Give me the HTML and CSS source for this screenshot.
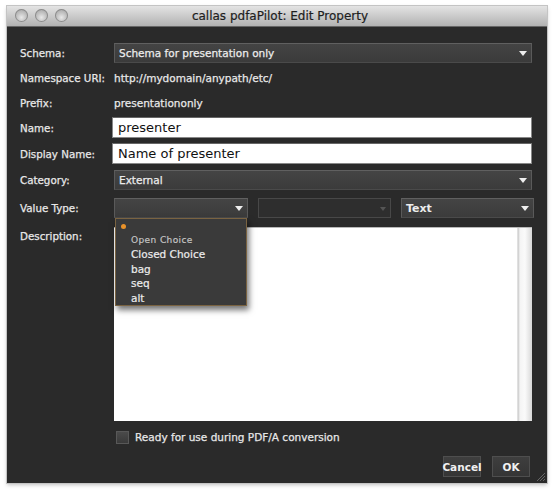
FILE: index.html
```html
<!DOCTYPE html>
<html>
<head>
<meta charset="utf-8">
<link rel="stylesheet" href="styles.css">
</head>
<body>
<div class="window">
  <div class="titlebar">
    <div class="lights"><span class="light"></span><span class="light"></span><span class="light"></span></div>
    <div class="title">callas pdfaPilot: Edit Property</div>
  </div>
  <div class="content">
    <div class="row r-schema">
      <div class="label">Schema:</div>
      <div class="select wide"><span>Schema for presentation only</span><i class="arrow"></i></div>
    </div>
    <div class="row r-ns">
      <div class="label">Namespace URI:</div>
      <div class="value">http://mydomain/anypath/etc/</div>
    </div>
    <div class="row r-prefix">
      <div class="label">Prefix:</div>
      <div class="value">presentationonly</div>
    </div>
    <div class="row r-name">
      <div class="label">Name:</div>
      <div class="input">presenter</div>
    </div>
    <div class="row r-display">
      <div class="label">Display Name:</div>
      <div class="input">Name of presenter</div>
    </div>
    <div class="row r-cat">
      <div class="label">Category:</div>
      <div class="select wide"><span>External</span><i class="arrow"></i></div>
    </div>
    <div class="row r-vt">
      <div class="label">Value Type:</div>
      <div class="vt-group">
        <div class="select vt"><span></span><i class="arrow"></i>
          <div class="menu">
            <div class="dot"></div>
            <div class="item header">Open Choice</div>
            <div class="item">Closed Choice</div>
            <div class="item">bag</div>
            <div class="item">seq</div>
            <div class="item">alt</div>
          </div>
        </div>
        <div class="select vt disabled"><span></span><i class="arrow"></i></div>
        <div class="select vt"><span class="bold">Text</span><i class="arrow"></i></div>
      </div>
    </div>
    <div class="row r-desc">
      <div class="label">Description:</div>
      <div class="textarea"><div class="scroll"></div></div>
    </div>
    <div class="row r-check">
      <div class="label"></div>
      <div class="checkwrap"><span class="checkbox"></span><span class="checklabel">Ready for use during PDF/A conversion</span></div>
    </div>
    <div class="row r-buttons">
      <div class="button">Cancel</div>
      <div class="button ok">OK</div>
    </div>
    <svg class="grip" width="12" height="12" viewBox="0 0 12 12">
      <path d="M11 3 L3 11 M11 6 L6 11 M11 9 L9 11" stroke="#666" stroke-width="1"/>
    </svg>
  </div>
</div>
</body>
</html>
```
FILE: styles.css
```css
html, body { margin: 0; padding: 0; background: #fff; }
body { width: 553px; height: 490px; position: relative; font-family: "DejaVu Sans", "Liberation Sans", sans-serif; }

.window {
  position: absolute; left: 7px; top: 6px; width: 540px; height: 477px;
  background: #2a2a2a;
  box-shadow: 0 0 0 1px #c4c4c4, 0 2px 4px rgba(0,0,0,0.25);
  display: flex; flex-direction: column;
}
.titlebar {
  height: 20px; position: relative;
  background: linear-gradient(#e4e4e4, #b2b2b2);
  border-bottom: 1px solid #666;
}
.lights { position: absolute; left: 8px; top: 3px; display: flex; gap: 7px; }
.light {
  width: 13px; height: 13px; border-radius: 50%;
  background: radial-gradient(circle at 50% 65%, #e8e8e8 0%, #c2c2c2 45%, #9a9a9a 100%);
  box-shadow: inset 0 0 0 1px #8c8c8c;
}
.title {
  text-align: center; font-size: 12px; line-height: 20px; color: #1e1e1e;
  padding-left: 6px; -webkit-text-stroke: 0.2px #1e1e1e;
}
.content { position: relative; flex: 1; padding: 16px 15px 0 13px; display: flex; flex-direction: column; }
.row { display: flex; align-items: center; }
.label { width: 94px; flex: none; font-size: 10.3px; color: #e8e8e8; -webkit-text-stroke: 0.25px #e8e8e8; }
.value { font-size: 10.5px; color: #e8e8e8; -webkit-text-stroke: 0.25px #e8e8e8; }

.r-schema { height: 20px; }
.r-ns { height: 20px; margin-top: 5px; }
.r-prefix { height: 20px; margin-top: 5px; }
.r-name { height: 21px; margin-top: 4px; }
.r-display { height: 21px; margin-top: 5px; }
.r-cat { height: 20px; margin-top: 6px; }
.r-vt { height: 20px; margin-top: 8px; }
.r-desc { height: 194px; margin-top: 9px; align-items: flex-start; }
.r-desc .label { padding-top: 3px; }
.r-check { height: 14px; margin-top: 9px; }
.r-buttons { height: 21px; margin-top: 12px; justify-content: flex-end; gap: 11px; padding-right: 2px; }

.select {
  position: relative; height: 20px; box-sizing: border-box;
  background: linear-gradient(#444, #3b3b3b);
  border: 1px solid #5a5a5a; border-top-color: #606060; border-bottom-color: #4a4a4a;
  display: flex; align-items: center; padding-left: 4px;
  font-size: 10.5px; color: #ececec; -webkit-text-stroke: 0.25px #ececec;
}
.select.wide { flex: 1; }
.arrow {
  position: absolute; right: 4px; top: 7px; width: 0; height: 0;
  border-left: 4px solid transparent; border-right: 4px solid transparent; border-top: 5px solid #eee;
}
.vt-group { flex: 1; display: flex; gap: 10px; }
.select.vt { width: 133px; flex: none; }
.select.vt:first-child { width: 134px; }
.select.disabled { background: #2e2e2e; border-color: #484848; }
.select.disabled .arrow { border-top-color: #555; border-left-width: 3px; border-right-width: 3px; border-top-width: 4px; top: 8px; }
.bold { font-weight: bold; font-size: 11px; -webkit-text-stroke: 0; }

.input {
  flex: 1; height: 21px; box-sizing: border-box; margin-left: -2px;
  background: #fff; border: 1px solid #888; border-top-color: #666;
  font-size: 13px; color: #111; padding-left: 5px; line-height: 19px;
}

.menu {
  position: absolute; left: 0; top: 19px; width: 132px; height: 88px; box-sizing: border-box;
  background: #3a3a3a; border: 1px solid #7a6341;
  box-shadow: 2px 4px 6px rgba(0,0,0,0.55);
  z-index: 5; padding-top: 15px; -webkit-text-stroke: 0;
}
.dot { position: absolute; left: 5px; top: 5px; width: 5px; height: 5px; border-radius: 50%; background: #e8922a; }
.item { font-size: 10.5px; color: #ececec; padding-left: 15px; height: 14.6px; line-height: 14.6px; -webkit-text-stroke: 0.2px #ececec; }
.item.header { font-size: 9px; color: #c8c8c8; letter-spacing: 0.4px; height: 13px; line-height: 13px; -webkit-text-stroke: 0.15px #c8c8c8; }

.textarea {
  flex: 1; height: 194px; box-sizing: border-box; position: relative;
  background: #fff; border-top: 1px solid #b8b8b8;
}
.scroll {
  position: absolute; right: 0; top: 0; bottom: 0; width: 14px;
  background: linear-gradient(to right, #c8c8c8 0, #f4f4f4 2px, #fafafa 50%, #d8d8d8 100%);
  border-left: 1px solid #e0e0e0;
}

.checkwrap { display: flex; align-items: center; margin-left: 2px; }
.checkbox {
  width: 13px; height: 13px; box-sizing: border-box;
  background: linear-gradient(#4a4a4a, #3a3a3a); border: 1px solid #585858;
}
.checklabel { font-size: 10.5px; color: #e8e8e8; margin-left: 6px; -webkit-text-stroke: 0.25px #e8e8e8; }

.button {
  width: 38px; height: 21px; box-sizing: border-box;
  background: linear-gradient(#3e3e3e, #353535);
  border: 1px solid #4e4e4e;
  font-size: 10.5px; font-weight: bold; color: #f0f0f0;
  display: flex; align-items: center; justify-content: center;
}
.grip { position: absolute; right: 1px; bottom: 1px; }
```
